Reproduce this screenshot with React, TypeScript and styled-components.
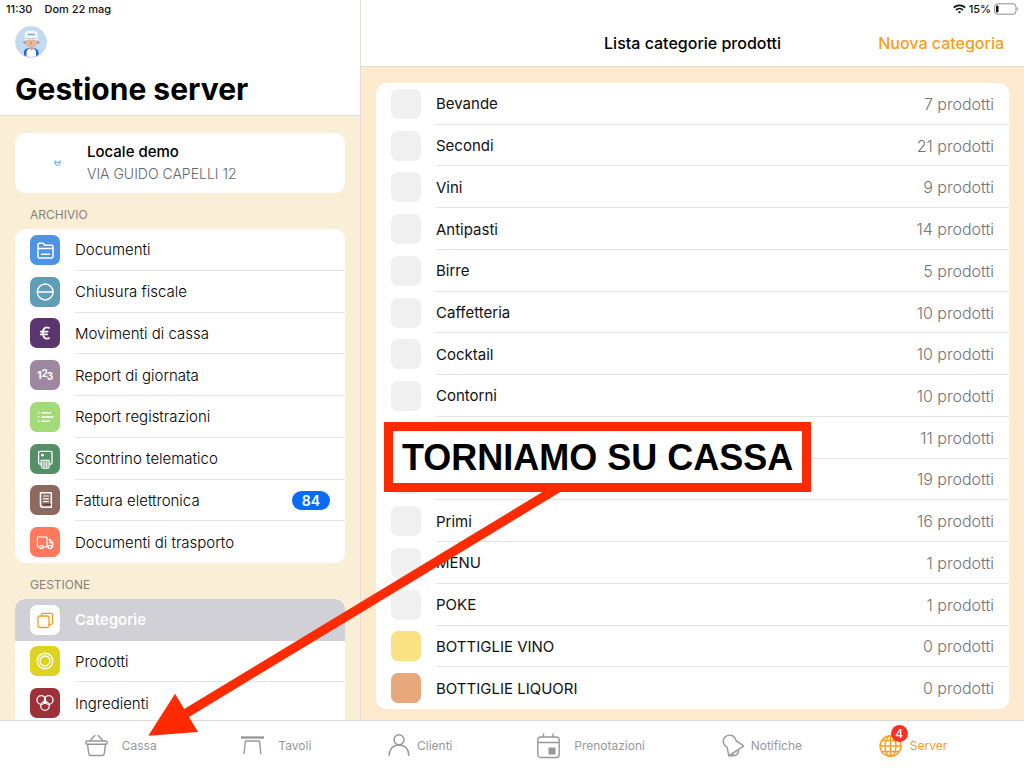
import React from "react";
import styled, { createGlobalStyle } from "styled-components";

const Global = createGlobalStyle`
  *, *::before, *::after { box-sizing: border-box; }
  body { margin: 0; background: #fff; }
  body, button { font-family: Inter, "Liberation Sans", sans-serif; }
  h1, h2, p, ul { margin: 0; padding: 0; font-weight: inherit; }
  ul { list-style: none; }
  a { color: inherit; text-decoration: none; }
`;

const ORANGE = "#f99d1c";
const RED = "#ff2a00";

const Screen = styled.div`
  position: relative;
  display: flex;
  flex-direction: column;
  height: 100vh;
  overflow: hidden;
  color: #111;
`;

const Panes = styled.div`
  display: flex;
  flex: 1;
  min-height: 0;
`;

const Sidebar = styled.aside`
  display: flex;
  flex-direction: column;
  flex: 0 0 361px;
  border-right: 1px solid #e2ddd4;
  background: #faeed7;
  overflow: hidden;
`;

const Detail = styled.main`
  display: flex;
  flex-direction: column;
  flex: 1;
  min-width: 0;
  background: #fdeacf;
`;

const SideHeader = styled.header`
  flex: none;
  height: 116px;
  padding: 0 15px;
  background: #fff;
  border-bottom: 1px solid #e2ddd2;
`;

const DetailHeader = styled.header`
  flex: none;
  height: 67px;
  background: #fff;
  border-bottom: 1px solid #e6dbc9;
`;

const Status = styled.div<{ $end?: boolean }>`
  display: flex;
  align-items: center;
  justify-content: ${(p) => (p.$end ? "flex-end" : "flex-start")};
  gap: ${(p) => (p.$end ? 3 : 12)}px;
  height: 18px;
  margin: ${(p) => (p.$end ? "0 5px 0 0" : "0 -9px")};
  font-size: 11px;
  font-weight: 500;
`;

const AvatarButton = styled.button`
  display: block;
  margin: 8px 0 0;
  padding: 0;
  border: 0;
  background: none;
  svg { display: block; }
`;

const Title = styled.h1`
  margin-top: 11px;
  font-size: 30px;
  line-height: 40px;
  font-weight: 700;
  color: #000;
`;

const NavRow = styled.div`
  display: grid;
  grid-template-columns: 1fr auto 1fr;
  align-items: center;
  height: 50px;
  padding: 0 20px;
`;

const NavTitle = styled.h2`
  grid-column: 2;
  font-size: 16px;
  font-weight: 500;
  color: #000;
`;

const NavAction = styled.button`
  justify-self: end;
  padding: 0;
  border: 0;
  background: none;
  color: ${ORANGE};
  font-size: 16px;
  font-weight: 500;
  white-space: nowrap;
`;

const SideBody = styled.div`
  flex: 1;
  min-height: 0;
  padding: 17px 15px 0;
  overflow: hidden;
`;

const VenueCard = styled.a`
  display: flex;
  align-items: center;
  height: 60px;
  border-radius: 10px;
  background: #fff;
`;

const VenueLogo = styled.span`
  display: flex;
  justify-content: flex-end;
  width: 46px;
  margin-right: 26px;
`;

const VenueName = styled.p`
  font-size: 15px;
  line-height: 22px;
  font-weight: 500;
  color: #000;
`;

const VenueAddress = styled.p`
  font-size: 14px;
  line-height: 22px;
  font-weight: 300;
  color: #66666a;
`;

const SectionTitle = styled.h2`
  padding: 13px 15px 5px;
  font-size: 12px;
  line-height: 18px;
  color: #86827b;
`;

const List = styled.ul<{ $height?: number; $cut?: boolean }>`
  display: grid;
  grid-auto-rows: 1fr;
  ${(p) => (p.$height ? `min-height: ${p.$height}px;` : "flex: 1; margin: 16px 15px 11px;")}
  border-radius: ${(p) => (p.$cut ? "10px 10px 0 0" : "10px")};
  background: #fff;
  overflow: hidden;
`;

const Item = styled.li`
  display: grid;
  min-height: 0;
`;

const RowLink = styled.a<{ $selected?: boolean; $regular?: boolean }>`
  display: flex;
  align-items: center;
  gap: 15px;
  padding-left: 15px;
  background: ${(p) => (p.$selected ? "#d1d0d6" : "transparent")};
  color: ${(p) => (p.$selected ? "#fff" : p.$regular ? "#111" : "#000")};
  font-size: 15px;
  font-weight: ${(p) => (p.$selected ? 600 : p.$regular ? 400 : 300)};
`;

const Tile = styled.span<{ $color: string }>`
  display: grid;
  place-items: center;
  flex: none;
  width: 30px;
  height: 30px;
  border-radius: 7px;
  background: ${(p) => p.$color};
  svg { display: block; }
`;

const RowBody = styled.span`
  display: flex;
  align-items: center;
  justify-content: space-between;
  flex: 1;
  align-self: stretch;
  padding: 1px 15px 0 0;
  border-bottom: 1px solid #e4e4e6;
  ${RowLink}[aria-current] &, ${Item}:last-child & { border-color: transparent; }
`;

const Count = styled.span`
  margin-left: auto;
  color: #747478;
  font-size: 16px;
  font-weight: 300;
`;

const Pill = styled.span`
  width: 38px;
  border-radius: 10px;
  background: #0a6cf5;
  color: #fff;
  font-size: 14px;
  line-height: 19px;
  font-weight: 600;
  text-align: center;
`;

const TabBar = styled.nav`
  display: flex;
  justify-content: space-evenly;
  flex: none;
  height: 48px;
  padding-top: 2px;
  border-top: 1px solid #dedbd7;
  background: #fff;
`;

const Tab = styled.a<{ $active?: boolean }>`
  display: flex;
  align-items: center;
  gap: ${(p) => (p.$active ? 8 : 6)}px;
  color: ${(p) => (p.$active ? ORANGE : "#98989b")};
  font-size: 12px;
`;

const TabIcon = styled.span<{ $wide?: boolean }>`
  position: relative;
  display: flex;
  padding: 0 ${(p) => (p.$wide ? 8 : 0)}px;
`;

const TabBadge = styled.span`
  position: absolute;
  top: -8px;
  right: -6px;
  width: 17px;
  height: 17px;
  border-radius: 50%;
  background: #fb3128;
  color: #fff;
  font-size: 12px;
  line-height: 17px;
  font-weight: 500;
  text-align: center;
`;

const Arrow = styled.svg`
  position: absolute;
  top: 480px;
  left: 140px;
  pointer-events: none;
`;

const Callout = styled.div`
  position: absolute;
  top: 422px;
  left: 384px;
  padding: 2px 9px 0;
  border: 9px solid ${RED};
  background: #fff;
  color: #000;
  font-family: "Liberation Sans", Arial, sans-serif;
  font-size: 36px;
  line-height: 50px;
  font-weight: 700;
  white-space: nowrap;
`;

type GlyphProps = { children: React.ReactNode; color?: string; width?: number };

const Glyph = ({ children, color = "#fff", width = 1.4 }: GlyphProps) => (
  <svg width="30" height="30" viewBox="0 0 30 30" fill="none" stroke={color} strokeWidth={width} strokeLinejoin="round" strokeLinecap="round" aria-hidden="true">
    {children}
  </svg>
);

const glyphs = {
  folder: (
    <Glyph width={1.5}>
      <path d="M8 21.500V9.500A1.200 1.200 0 0 1 9.200 8.300h4l1.500 2h7A1.300 1.300 0 0 1 23 11.600v9.900a1.500 1.500 0 0 1-1.500 1.500H9.500A1.500 1.500 0 0 1 8 21.500z" />
      <path d="M8 13.500h15M11.500 19.300h8" />
    </Glyph>
  ),
  closing: (
    <Glyph width={1.5}>
      <circle cx="15.200" cy="15" r="7.900" />
      <path d="M7.500 15h15.400" />
    </Glyph>
  ),
  euro: (
    <Glyph width={1.8}>
      <path d="M19 9.800c-3.800-1.500-6.200 1-6.200 5.200s2.400 6.700 6.200 5.200M10.700 13.600h7M10.700 16.400h6.300" />
    </Glyph>
  ),
  numbers: (
    <svg width="30" height="30" viewBox="0 0 30 30" fill="#fff" fontFamily="Inter, sans-serif" fontWeight="700" aria-hidden="true">
      <text x="7" y="19" fontSize="11">1</text>
      <text x="11.500" y="17" fontSize="10">2</text>
      <text x="16.800" y="20" fontSize="10">3</text>
    </svg>
  ),
  lines: (
    <Glyph width={1.5}>
      <path d="M12 10.800h8.500M12 15h11M12 19.200h7.500M8.500 10.800h.3M8.500 15h.3M8.500 19.200h.3" />
    </Glyph>
  ),
  printer: (
    <Glyph width={1.3}>
      <path d="M11 20H9.800A1.200 1.200 0 0 1 8.600 18.800V8.600c0-.7.500-1.200 1.200-1.200h11c.7 0 1.200.5 1.200 1.200v10.200c0 .7-.5 1.200-1.200 1.200H19.500" />
      <path d="M11.300 16.200h8v6.600a1.500 1.500 0 0 1-1.500 1.500h-5a1.500 1.500 0 0 1-1.500-1.500z" fill="#ffffff66" strokeWidth="1" />
      <path d="M14 18v5M16.600 18v5" strokeWidth=".8" />
      <circle cx="12.400" cy="11.200" r="1.400" fill="#fff" stroke="none" />
    </Glyph>
  ),
  invoice: (
    <Glyph width={1.6}>
      <path d="M10.500 7.800h10.800v14.400H13a2.500 2.500 0 0 1-2.500-2.500z" />
      <path d="M13.500 11h5M13.500 13.800h5M13.500 16.600h5" strokeWidth="1.200" />
      <path d="M14 19.400h6.500" stroke="#6b3428" strokeWidth="1.300" />
    </Glyph>
  ),
  truck: (
    <Glyph width={1.2}>
      <path d="M9.700 20H8.200a.8.800 0 0 1-.8-.8v-8.400c0-.5.300-.8.800-.8h8c.5 0 .8.300.8.800V20M13.300 20h4.900M17 12.500h3l2.700 3.200V20h-1" />
      <path d="M19.800 12.800v3h2.700" />
      <circle cx="11.500" cy="20" r="1.700" />
      <circle cx="20" cy="20" r="1.700" />
    </Glyph>
  ),
  stack: (
    <Glyph color={ORANGE} width={1.3}>
      <rect x="8" y="11" width="11" height="11.500" rx="2" />
      <path d="M11.500 11V9.800a1.500 1.500 0 0 1 1.500-1.500h8a1.500 1.500 0 0 1 1.500 1.500v8a1.500 1.500 0 0 1-1.500 1.500h-2" />
    </Glyph>
  ),
  plate: (
    <Glyph width={1.4}>
      <circle cx="15" cy="15" r="7.800" />
      <circle cx="15" cy="15" r="5" />
    </Glyph>
  ),
  rings: (
    <Glyph width={1.3}>
      <circle cx="11.300" cy="12" r="4.300" />
      <circle cx="18.700" cy="12" r="4.300" />
      <circle cx="15" cy="18" r="4.300" />
      <circle cx="15" cy="14" r="1.200" />
    </Glyph>
  ),
};

type Entry = { label: string; color: string; icon: keyof typeof glyphs; badge?: number; selected?: boolean };

const archive: Entry[] = [
  { label: "Documenti", color: "#4d94e6", icon: "folder" },
  { label: "Chiusura fiscale", color: "#609db8", icon: "closing" },
  { label: "Movimenti di cassa", color: "#5a3570", icon: "euro" },
  { label: "Report di giornata", color: "#9f879f", icon: "numbers" },
  { label: "Report registrazioni", color: "#a3db76", icon: "lines" },
  { label: "Scontrino telematico", color: "#558f68", icon: "printer" },
  { label: "Fattura elettronica", color: "#8c6a60", icon: "invoice", badge: 84 },
  { label: "Documenti di trasporto", color: "#ff7a5c", icon: "truck" },
];

const management: Entry[] = [
  { label: "Categorie", color: "#fff", icon: "stack", selected: true },
  { label: "Prodotti", color: "#dfd322", icon: "plate" },
  { label: "Ingredienti", color: "#9d3038", icon: "rings" },
];

const GREY = "#f0f0f0";

const categories = [
  { name: "Bevande", count: 7 },
  { name: "Secondi", count: 21 },
  { name: "Vini", count: 9 },
  { name: "Antipasti", count: 14 },
  { name: "Birre", count: 5 },
  { name: "Caffetteria", count: 10 },
  { name: "Cocktail", count: 10 },
  { name: "Contorni", count: 10 },
  { name: "", count: 11 },
  { name: "", count: 19 },
  { name: "Primi", count: 16 },
  { name: "MENU", count: 1 },
  { name: "POKE", count: 1 },
  { name: "BOTTIGLIE VINO", count: 0, color: "#f9e184" },
  { name: "BOTTIGLIE LIQUORI", count: 0, color: "#e9a77c" },
];

const TabGlyph = ({ children }: { children: React.ReactNode }) => (
  <svg width="23" height="26" viewBox="0 0 23 26" fill="none" stroke="currentColor" strokeWidth="1.4" strokeLinecap="round" strokeLinejoin="round" aria-hidden="true">
    {children}
  </svg>
);

const tabs = [
  {
    label: "Cassa",
    wide: true,
    icon: (
      <TabGlyph>
        <rect x=".8" y="8" width="21.400" height="3.200" rx="1.500" />
        <path d="M2.500 11.400l1.300 9.400a2 2 0 0 0 2 1.700h11.400a2 2 0 0 0 2-1.700l1.300-9.400M5 7.800L9.800 2.500M18 7.800L13.200 2.500" />
      </TabGlyph>
    ),
  },
  {
    label: "Tavoli",
    wide: true,
    icon: (
      <TabGlyph>
        <path d="M0 4.500h23" strokeWidth="2.400" strokeLinecap="butt" />
        <path d="M4.500 8h14M4.500 8L3 20.500M18.500 8l1.300 12.500" />
      </TabGlyph>
    ),
  },
  {
    label: "Clienti",
    icon: (
      <TabGlyph>
        <circle cx="11" cy="6.800" r="5" />
        <path d="M1.200 22.500c0-6.500 4-10.500 9.800-10.500s9.800 4 9.800 10.500" />
      </TabGlyph>
    ),
  },
  {
    label: "Prenotazioni",
    wide: true,
    icon: (
      <TabGlyph>
        <rect x=".8" y="4" width="21.400" height="20.500" rx="3" />
        <path d="M1 9.500h21M6.500 4V1M16 4V1" />
        <rect x="11.500" y="14.500" width="7" height="7" fill="currentColor" stroke="none" />
      </TabGlyph>
    ),
  },
  {
    label: "Notifiche",
    icon: (
      <TabGlyph>
        <path d="M6.800 22.800L5.200 14.500C2.500 12.500 1 10 1.200 7.800 1.600 4.300 4.800 1.900 8.300 2.200c3.200.3 5 2.200 5.700 5.400l6.900 4.800c.6.400.5 1-.1 1.300L6.800 22.800z" />
        <path d="M7 22.800h4c3.500 0 5.500-2 5.500-6M11 20.600c0 1.500.8 2.200 2 2" />
      </TabGlyph>
    ),
  },
  {
    label: "Server",
    active: true,
    badge: 4,
    icon: (
      <TabGlyph>
        <circle cx="11.500" cy="13" r="10.400" />
        <ellipse cx="11.500" cy="13" rx="5.500" ry="10.400" />
        <path d="M11.500 2.600v20.800M1.100 13h20.800M3 7.500h17M3 18.500h17" />
      </TabGlyph>
    ),
  },
];

const Avatar = () => (
  <svg width="32" height="32" viewBox="0 0 32 32" aria-hidden="true">
    <defs>
      <clipPath id="face"><circle cx="16" cy="16" r="15" /></clipPath>
    </defs>
    <circle cx="16" cy="16" r="15.500" fill="#bfdcf7" stroke="#d6d9dd" />
    <g clipPath="url(#face)">
      <path d="M9 30.500V26c0-2 1.500-3.500 4-3.800h6c2.500.3 4.500 1.800 4.500 3.800v4.500z" fill="#1f63d2" />
      <path d="M11.500 31v-5c0-2 2-3.500 4.800-3.500s4.700 1.500 4.700 3.500v5z" fill="#fff" />
      <path d="M14 19h4.500v4c-1 1.500-3.500 1.500-4.500 0z" fill="#dda48c" />
      <ellipse cx="16.200" cy="15.500" rx="6.200" ry="6.200" fill="#e5b7a3" />
      <circle cx="9.500" cy="16.500" r="1.200" fill="#b98472" />
      <circle cx="23" cy="16.500" r="1.200" fill="#b98472" />
      <path d="M9.700 14.500V7.500c0-2 2.500-3 6.500-3s6.500 1 6.500 3v7c-3-1.500-10-1.500-13 0z" fill="#f4f7fb" />
      <path d="M12.500 8.500h7.500" stroke="#7da4e6" strokeWidth="1.500" />
      <path d="M10.500 12.500h11.500" stroke="#b4bac2" strokeWidth="1" strokeDasharray="2 1" />
      <path d="M16.200 15.500v3" stroke="#b98472" strokeWidth="1" />
    </g>
  </svg>
);

const EntryList = ({ entries, height, cut }: { entries: Entry[]; height: number; cut?: boolean }) => (
  <List $height={height} $cut={cut}>
    {entries.map((e) => (
      <Item key={e.label}>
        <RowLink href="#" $selected={e.selected} aria-current={e.selected ? "page" : undefined}>
          <Tile $color={e.color}>{glyphs[e.icon]}</Tile>
          <RowBody>
            {e.label}
            {e.badge !== undefined && <Pill>{e.badge}</Pill>}
          </RowBody>
        </RowLink>
      </Item>
    ))}
  </List>
);

export default function App() {
  return (
    <Screen>
      <Global />
      <Panes>
        <Sidebar>
          <SideHeader>
            <Status>
              <span>11:30</span>
              <span>Dom 22 mag</span>
            </Status>
            <AvatarButton type="button" aria-label="Profilo"><Avatar /></AvatarButton>
            <Title>Gestione server</Title>
          </SideHeader>
          <SideBody>
            <VenueCard href="#">
              <VenueLogo>
                <svg width="7" height="6" viewBox="0 0 7 6" fill="none" stroke="#42a5dc" aria-hidden="true">
                  <path d="M1 .500v2.500c0 1.300 1 2.300 2.500 2.300S6 4.300 6 3V.500M1 2.200h5" />
                </svg>
              </VenueLogo>
              <div>
                <VenueName>Locale demo</VenueName>
                <VenueAddress>VIA GUIDO CAPELLI 12</VenueAddress>
              </div>
            </VenueCard>
            <SectionTitle>ARCHIVIO</SectionTitle>
            <EntryList entries={archive} height={334} />
            <SectionTitle>GESTIONE</SectionTitle>
            <EntryList entries={management} height={125} cut />
          </SideBody>
        </Sidebar>
        <Detail>
          <DetailHeader>
            <Status $end>
              <svg width="13" height="10" viewBox="0 0 13 10" fill="none" stroke="#111" strokeWidth="1.700" aria-hidden="true">
                <path d="M.8 3.700c3.300-3 8.100-3 11.400 0M3 6c2-1.800 5-1.800 7 0" />
                <path d="M6.500 9.600L4.700 7.800c1-.9 2.600-.9 3.600 0z" fill="#111" stroke="none" />
              </svg>
              <span>15%</span>
              <svg width="25" height="12" viewBox="0 0 25 12" fill="none" aria-hidden="true">
                <rect x=".5" y=".8" width="21.500" height="10.400" rx="3" stroke="#8e8e8e" />
                <rect x="2" y="2.500" width="2.500" height="7" rx="1" fill="#111" />
                <path d="M23.300 4.200c1.300.6 1.300 3 0 3.600z" fill="#8e8e8e" />
              </svg>
            </Status>
            <NavRow>
              <NavTitle>Lista categorie prodotti</NavTitle>
              <NavAction type="button">Nuova categoria</NavAction>
            </NavRow>
          </DetailHeader>
          <List>
            {categories.map((c, i) => (
              <Item key={i}>
                <RowLink href="#" $regular>
                  <Tile $color={c.color ?? GREY} />
                  <RowBody>
                    {c.name}
                    <Count>{c.count} prodotti</Count>
                  </RowBody>
                </RowLink>
              </Item>
            ))}
          </List>
        </Detail>
      </Panes>
      <TabBar>
        {tabs.map((t) => (
          <Tab key={t.label} href="#" $active={t.active}>
            <TabIcon $wide={t.wide}>
              {t.icon}
              {t.badge && <TabBadge>{t.badge}</TabBadge>}
            </TabIcon>
            {t.label}
          </Tab>
        ))}
      </TabBar>
      <Arrow width="440" height="260" viewBox="140 480 440 260" aria-hidden="true">
        <path d="M558 488L180 717" stroke={RED} strokeWidth="9.200" />
        <path d="M148.300 735.700L175 693.700L198 732z" fill={RED} />
      </Arrow>
      <Callout>TORNIAMO SU CASSA</Callout>
    </Screen>
  );
}
